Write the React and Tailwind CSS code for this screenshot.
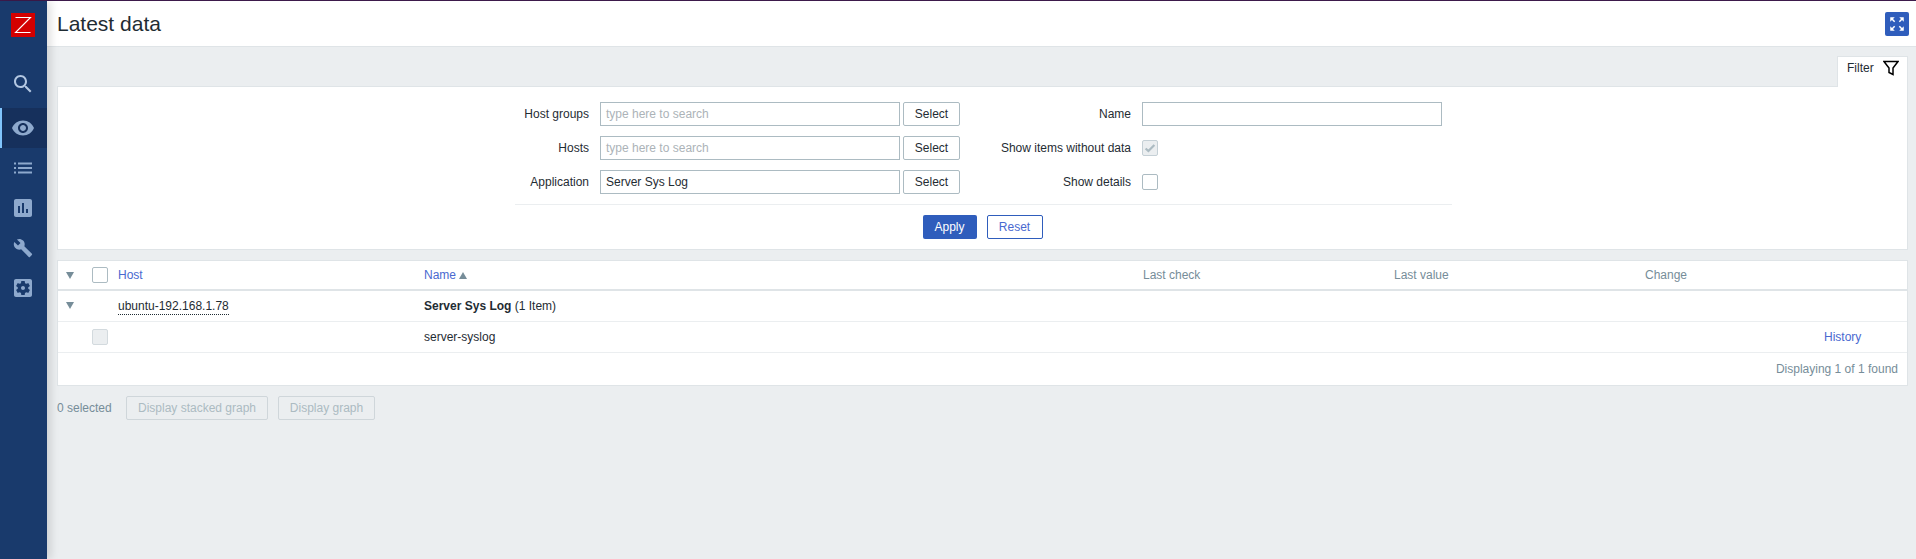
import React from 'react';

const cols = 'grid grid-cols-[34px_26px_306px_719px_251px_251px_179px_1fr] items-center';

function Icon({ d, className = 'w-6 h-6' }) {
  return (
    <svg viewBox="0 0 24 24" className={className} fill="currentColor">
      <path d={d} />
    </svg>
  );
}

const icons = {
  search: 'M15.5 14h-.79l-.28-.27C15.41 12.59 16 11.11 16 9.5 16 5.91 13.09 3 9.5 3S3 5.91 3 9.5 5.91 16 9.5 16c1.61 0 3.09-.59 4.23-1.57l.27.28v.79l5 4.99L20.49 19l-4.99-5zm-6 0C7.01 14 5 11.99 5 9.5S7.01 5 9.5 5 14 7.01 14 9.5 11.99 14 9.5 14z',
  eye: 'M12 4.5C7 4.5 2.73 7.61 1 12c1.73 4.39 6 7.5 11 7.5s9.27-3.11 11-7.5c-1.73-4.39-6-7.5-11-7.5zM12 17c-2.76 0-5-2.24-5-5s2.24-5 5-5 5 2.24 5 5-2.24 5-5 5zm0-8c-1.66 0-3 1.34-3 3s1.34 3 3 3 3-1.34 3-3-1.34-3-3-3z',
  list: 'M3 6.5h2v2H3zM7 6.5h14v2H7zM3 11h2v2H3zM7 11h14v2H7zM3 15.5h2v2H3zM7 15.5h14v2H7z',
  chart: 'M19 3H5c-1.1 0-2 .9-2 2v14c0 1.1.9 2 2 2h14c1.1 0 2-.9 2-2V5c0-1.1-.9-2-2-2zM9 17H7v-7h2v7zm4 0h-2V7h2v10zm4 0h-2v-4h2v4z',
  wrench: 'M22.7 19l-9.1-9.1c.9-2.3.4-5-1.5-6.9-2-2-5-2.4-7.4-1.3L9 6 6 9 1.6 4.7C.4 7.1.9 10.1 2.9 12.1c1.9 1.9 4.6 2.4 6.9 1.5l9.1 9.1c.4.4 1 .4 1.4 0l2.3-2.3c.5-.4.5-1.1.1-1.4z',
  gear: 'M12 10c-1.1 0-2 .9-2 2s.9 2 2 2 2-.9 2-2-.9-2-2-2zm7-7H5c-1.11 0-2 .9-2 2v14c0 1.1.89 2 2 2h14c1.11 0 2-.9 2-2V5c0-1.1-.89-2-2-2zm-1.75 9c0 .23-.02.46-.05.68l1.48 1.16c.13.11.17.3.08.45l-1.4 2.42c-.09.15-.27.21-.43.15l-1.74-.7c-.36.28-.76.51-1.18.69l-.26 1.85c-.03.17-.18.3-.35.3h-2.8c-.17 0-.32-.13-.35-.29l-.26-1.85c-.43-.18-.82-.41-1.18-.69l-1.74.7c-.16.06-.34 0-.43-.15l-1.4-2.42c-.09-.15-.05-.34.08-.45l1.48-1.16c-.03-.23-.05-.46-.05-.69 0-.23.02-.46.05-.68l-1.48-1.16c-.13-.11-.17-.3-.08-.45l1.4-2.42c.09-.15.27-.21.43-.15l1.74.7c.36-.28.76-.51 1.18-.69l.26-1.85c.03-.17.18-.3.35-.3h2.8c.17 0 .32.13.35.29l.26 1.85c.43.18.82.41 1.18.69l1.74-.7c.16-.06.34 0 .43.15l1.4 2.42c.09.15.05.34-.08.45l-1.48 1.16c.03.23.05.46.05.69z',
  expand: 'M15 3l2.3 2.3-2.89 2.87 1.42 1.42L18.7 6.7 21 9V3zM3 9l2.3-2.3 2.87 2.89 1.42-1.42L6.7 5.3 9 3H3zm6 12l-2.3-2.3 2.89-2.87-1.42-1.42L5.3 17.3 3 15v6zm12-6l-2.3 2.3-2.87-2.89-1.42 1.42 2.89 2.87L15 21h6z',
};

function Sidebar() {
  return (
    <aside className="w-[47px] shrink-0 bg-[#193a6c] text-[#8ea9cd] flex flex-col shadow-[4px_0_8px_rgba(0,0,0,0.12)] z-10">
      <svg viewBox="0 0 24 24" className="w-6 h-6 ml-[11px] mt-3">
        <rect width="24" height="24" fill="#d40000" />
        <path d="M4.5 4.5h15L4.5 19.5h15" fill="none" stroke="#fff" strokeWidth="1.1" />
      </svg>
      <div className="h-10 mt-[27px] mb-1 pl-[11px] flex items-center text-[#b3c7e2]">
        <Icon d={icons.search} />
      </div>
      <div className="h-10 pl-[9px] flex items-center bg-[#16305c] border-l-2 border-[#80c4fc]">
        <Icon d={icons.eye} />
      </div>
      <div className="h-10 pl-[11px] flex items-center">
        <Icon d={icons.list} />
      </div>
      <div className="h-10 pl-[11px] flex items-center">
        <Icon d={icons.chart} />
      </div>
      <div className="h-10 pl-[13px] flex items-center">
        <Icon d={icons.wrench} className="w-5 h-5" />
      </div>
      <div className="h-10 pl-[11px] flex items-center">
        <Icon d={icons.gear} />
      </div>
    </aside>
  );
}

function TextInput({ value, placeholder }) {
  return (
    <div className={`w-[300px] h-6 border border-[#acbbc2] bg-white px-[5px] leading-[22px] ${value ? 'text-[#1f2c33]' : 'text-[#acb3b8]'}`}>
      {value || placeholder}
    </div>
  );
}

function SelectBtn() {
  return (
    <button className="w-[57px] h-6 ml-[3px] border border-[#acbbc2] rounded-[2px] bg-white text-[#1f2c33]">Select</button>
  );
}

function Row({ leftLabel, input, rightLabel, right }) {
  return (
    <div className="flex items-center h-6">
      <div className="w-[74px] text-right mr-[11px]">{leftLabel}</div>
      {input}
      <SelectBtn />
      <div className="w-[171px] text-right mr-[11px]">{rightLabel}</div>
      {right}
    </div>
  );
}

function FilterPanel() {
  return (
    <>
      <div className="self-end mt-[9px] mr-2 w-[71px] h-[31px] -mb-px bg-white border border-b-0 border-[#dfe4e7] pl-[9px] pt-[2px] relative z-10">
        <div className="flex items-center h-[18px]">
          <span>Filter</span>
          <svg viewBox="0 0 16 16" className="w-4 h-4 ml-[9px] text-black" fill="none" stroke="currentColor" strokeWidth="1.5">
            <path d="M1 1.5h14L10 8v6.5l-4-2V8z" />
          </svg>
        </div>
      </div>
      <section className="ml-[10px] mr-2 bg-white border border-[#dfe4e7] pt-[15px] pb-[10px]">
        <div className="ml-[457px] w-[937px] flex flex-col gap-[10px]">
          <Row leftLabel="Host groups" input={<TextInput placeholder="type here to search" />} rightLabel="Name"
            right={<div className="w-[300px] h-6 border border-[#acbbc2]" />} />
          <Row leftLabel="Hosts" input={<TextInput placeholder="type here to search" />} rightLabel="Show items without data"
            right={
              <div className="w-4 h-4 border border-[#c5d0d6] rounded-[2px] bg-[#ebeef0] flex items-center justify-center">
                <svg viewBox="0 0 16 16" className="w-[14px] h-[14px]" fill="none" stroke="#acbbc2" strokeWidth="2.5">
                  <path d="M3 8.5l3.2 3L13 4.5" />
                </svg>
              </div>
            } />
          <Row leftLabel="Application" input={<TextInput value="Server Sys Log" />} rightLabel="Show details"
            right={<div className="w-4 h-4 border border-[#acbbc2] rounded-[2px] bg-white" />} />
        </div>
        <div className="ml-[457px] w-[937px] mt-[10px] pt-[10px] pr-[2px] border-t border-[#ebeef0] flex justify-center gap-[10px]">
          <button className="w-[54px] h-6 rounded-[2px] bg-[#2f5dbc] text-white">Apply</button>
          <button className="w-[56px] h-6 rounded-[2px] border border-[#2f5dbc] bg-white text-[#4a69d0]">Reset</button>
        </div>
      </section>
    </>
  );
}

const Caret = ({ up }) => (
  <svg viewBox="0 0 8 7" className="w-2 h-[7px] text-[#768d99]" fill="currentColor">
    <path d={up ? 'M0 7h8L4 0z' : 'M0 0h8L4 7z'} />
  </svg>
);

function DataTable() {
  return (
    <section className="ml-[10px] mr-2 mt-[10px] bg-white border border-[#dfe4e7]">
      <div className={`${cols} h-[28px] border-b-2 border-[#dfe4e7] text-[#768d99] box-content`}>
        <div className="pl-[8px]"><Caret /></div>
        <div className="w-4 h-4 border border-[#acbbc2] rounded-[2px]" />
        <div className="text-[#4a69d0]">Host</div>
        <div className="flex items-center gap-[3px] text-[#4a69d0]">Name <Caret up /></div>
        <div>Last check</div>
        <div>Last value</div>
        <div className="col-span-2">Change</div>
      </div>
      <div className={`${cols} h-[30px] border-b border-[#ebeef0] box-content`}>
        <div className="pl-[8px] -mt-[2px]"><Caret /></div>
        <div />
        <div><span className="border-b border-dotted border-[#1f2c33] pb-px">ubuntu-192.168.1.78</span></div>
        <div className="col-span-5"><b>Server Sys Log</b> (1 Item)</div>
      </div>
      <div className={`${cols} h-[30px] border-b border-[#ebeef0] box-content`}>
        <div />
        <div className="w-4 h-4 border border-[#d3dade] rounded-[2px] bg-[#ebeef0]" />
        <div />
        <div>server-syslog</div>
        <div /><div /><div />
        <div className="text-[#4a69d0]">History</div>
      </div>
      <div className="h-[32px] flex items-center justify-end pr-[9px] text-[#768d99]">Displaying 1 of 1 found</div>
    </section>
  );
}

export default function App() {
  return (
    <div className="h-[559px] w-full overflow-hidden flex flex-col bg-[#ebeef0] text-[#1f2c33] text-[12px] font-['Liberation_Sans',Arial,sans-serif]">
      <div className="h-px shrink-0 bg-[#3d1a4b]" />
      <div className="flex flex-1 min-h-0">
        <Sidebar />
        <main className="flex-1 min-w-0 flex flex-col">
          <header className="h-[46px] shrink-0 bg-white border-b border-[#dfe4e7] flex items-center justify-between pl-[10px] pr-[7px]">
            <h1 className="text-[21px] leading-none">Latest data</h1>
            <div className="w-6 h-6 rounded-[2px] bg-[#2f5dbc] text-white flex items-center justify-center">
              <Icon d={icons.expand} className="w-[18px] h-[18px]" />
            </div>
          </header>
          <FilterPanel />
          <DataTable />
          <div className="ml-[10px] mt-[10px] flex items-center h-6 text-[#768d99]">
            <span className="w-[69px]">0 selected</span>
            <button className="w-[142px] h-6 border border-[#cfd6da] rounded-[2px] bg-[#ebeef0] text-[#acbbc2]">Display stacked graph</button>
            <button className="w-[97px] h-6 ml-[10px] border border-[#cfd6da] rounded-[2px] bg-[#ebeef0] text-[#acbbc2]">Display graph</button>
          </div>
        </main>
      </div>
    </div>
  );
}
